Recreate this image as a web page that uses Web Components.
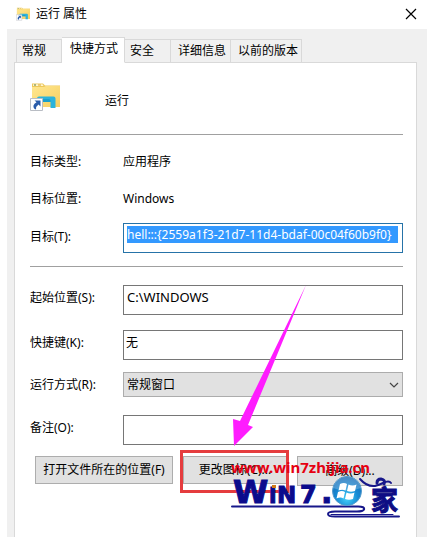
<!DOCTYPE html>
<html lang="zh-CN">
<head>
<meta charset="utf-8">
<title>运行 属性</title>
<style>
html{background:#fff}
body{margin:0;font:12px/16px "Noto Sans","Noto Sans CJK SC",sans-serif;color:#000}
</style>
</head>
<body>
<shortcut-dialog></shortcut-dialog>
<script>
const define=(name,html,setup)=>customElements.define(name,class extends HTMLElement{
  constructor(){super();this.attachShadow({mode:'open'});}
  connectedCallback(){
    const t=document.createElement('template');t.innerHTML=html;
    this.shadowRoot.replaceChildren(t.content.cloneNode(true));
    if(setup)setup(this,this.shadowRoot);
  }
});

define('folder-icon',`
<style>:host{display:block;width:30px;height:30px}svg{display:block;width:100%;height:100%}</style>
<svg viewBox="0 0 30 30" aria-hidden="true">
<defs><linearGradient id="f" x1="0" y1="0" x2="1" y2="1"><stop offset="0" stop-color="#ffe78f"/><stop offset="1" stop-color="#f6cf62"/></linearGradient></defs>
<path d="M2 1.500h11l2 2H30V25H2z" fill="#edc85a"/>
<path d="M3 2.200h9.500l1 1.800H3z" fill="#fff6cf"/><path d="M4 2.500h2v1H4z" fill="#5c7f3f"/><path d="M8 2.500h3v1H8z" fill="#d9a72c"/>
<path d="M2 5h12l2-1h14v21H2z" fill="url(#f)"/>
<path d="M7 16.500q0-2 2-2h14.500q2 0 2 2v9.500h-5v-6h-9v5H7z" fill="#2bb3dc"/>
<path d="M12 20h8.500v-1.500q0-1.500-2-1.500h-6.500z" fill="#1b9fcb"/>
<path d="M.5 16.500h12v12H.5z" fill="#fff" stroke="#b9bdc4"/>
<path d="M4.500 18.500h6v6l-2-2q-2.500 1.500-2.500 5-3-1-2.500-4 .5-2 3-3.200z" fill="#2a5caa"/>
</svg>`);

define('title-bar',`
<style>
:host{display:flex;align-items:center;height:29px;padding:0 8px 2px 16px;box-sizing:border-box;background:#fff}
folder-icon{width:14px;height:14px;margin-right:6px}
h1{font:inherit;margin:0;flex:1}
button{border:0;padding:2px;background:none;width:16px;height:16px}
svg{display:block;width:12px;height:12px}
</style>
<folder-icon></folder-icon><h1><slot></slot></h1>
<button aria-label="关闭"><svg viewBox="0 0 12 12"><path d="M1 1l10 10M11 1L1 11" stroke="#000" stroke-width="1.200"/></svg></button>`);

define('tab-strip',`
<style>
:host{display:flex;align-items:flex-end;height:25px;padding-left:2px;margin-bottom:-1px;position:relative}
</style><slot></slot>`,h=>h.setAttribute('role','tablist'));

define('tab-item',`
<style>
:host{display:block;min-width:0}
button{font:inherit;color:inherit;box-sizing:border-box;width:100%;height:24px;white-space:nowrap;text-align:left;
 padding:0 5px;border:1px solid #d9d9d9;border-left-width:0;background:#f0f0f0}
:host([first]) button{border-left-width:1px}
:host([selected]) button{height:26px;background:#fff;border-bottom-color:#fff;padding:0 8px 3px}
:host([wide]) button{padding-left:7px}
</style><button role="tab"><slot></slot></button>`);

define('static-row',`
<style>
:host{display:grid;grid-template-columns:93px 1fr;align-items:center;height:37px}
</style><span><slot name="label"></slot></span><span><slot></slot></span>`);

define('field-row',`
<style>
:host{display:grid;grid-template-columns:93px 1fr;align-items:center}
label{padding-bottom:4px}
input{font:13px/17px "Noto Sans","Noto Sans CJK SC",sans-serif;color:#000;box-sizing:border-box;width:100%;min-width:0;height:30px;margin:0;
 border:1px solid #767676;border-radius:0;background:#fff;padding:2px 3px 9px;outline:0}
:host([small]) input,:host([active]) input{font-size:12px}
:host([small]) input{padding-left:2px}
:host([active]) label{padding-bottom:2px}
:host([active]) input{border-color:#2673a8;color:#fff;background:#3399ff content-box;padding-right:4px}
</style><label for="c"></label><input id="c" type="text">`,(h,r)=>{
  r.querySelector('label').textContent=h.getAttribute('label');
  r.querySelector('input').value=h.getAttribute('value')||'';
});

define('choice-row',`
<style>
:host{display:grid;grid-template-columns:93px 1fr;align-items:center}
.box{display:grid;align-items:center}
.box>*{grid-area:1/1}
select{appearance:none;font:inherit;color:#000;width:100%;height:25px;box-sizing:border-box;margin:0;
 border:1px solid #acacac;border-radius:0;background:#e1e1e1;padding:0 20px 0 3px}
svg{width:10px;height:8px;justify-self:end;margin-right:4px;pointer-events:none}
</style><label for="c"></label><div class="box"><select id="c"><option></option></select>
<svg viewBox="0 0 10 8"><path d="M1 2l4 4 4-4" fill="none" stroke="#444" stroke-width="1.200"/></svg></div>`,(h,r)=>{
  r.querySelector('label').textContent=h.getAttribute('label');
  r.querySelector('option').textContent=h.getAttribute('value');
});

define('push-button',`
<style>
:host{display:block;position:relative}
button{font:inherit;color:#000;box-sizing:border-box;width:100%;height:28px;margin:0;padding:0;white-space:nowrap;
 border:1px solid #adadad;border-radius:0;background:#e1e1e1}
:host([tall]) button{height:30px}
:host([framed])::after{content:"";position:absolute;inset:-6px -2px -7px -3px;border:3px solid #e53c3e}
</style><button><slot></slot></button>`);

define('pointer-arrow',`
<style>:host{display:block;width:76px;height:164px;pointer-events:none}svg{display:block}</style>
<svg width="76" height="164" viewBox="0 0 76 164" aria-hidden="true">
<path d="M75 0L9 136 2 134l1 27L22 142l-5-2z" fill="#ff1cff"/>
</svg>`);

define('site-mark',`
<style>:host{display:block;width:174px;height:64px;pointer-events:none}svg{display:block;overflow:visible}</style>
<svg width="174" height="64" viewBox="0 0 174 64">
<defs>
<radialGradient id="orb" cx=".5" cy=".75" r=".75"><stop offset="0" stop-color="#46d2fa"/><stop offset=".5" stop-color="#168bd4"/><stop offset="1" stop-color="#1769b4"/></radialGradient>
</defs>
<text x="1" y="17" font-family="Noto Sans, sans-serif" font-weight="700" font-size="15" fill="#e60012">www.win7zhijia.cn</text>
<g fill="#0b0b8c" stroke="#0b0b8c" font-family="DejaVu Sans, sans-serif" font-weight="700">
<text y="47" stroke-width="1"><tspan x="3" font-size="32">W</tspan><tspan x="39" font-size="22">i</tspan><tspan x="47" font-size="23">N</tspan><tspan x="70" font-size="24">7</tspan><tspan x="91" font-size="30">.</tspan></text>
</g>
<path d="M42 29h4v3h-4z" fill="#d17a19"/>
<g fill="none" stroke="#17178a" stroke-linecap="round">
<path d="M2 50.500H128q7 0 6 3-1 2-7 2H105q-7 0-7 2.500 0 2.500 7 2.500H169" stroke-width="2"/>
<path d="M101 58.500h62" stroke-width="1"/>
<path d="M130 23q7 8 15 7 4-1 8-3 6-3 8 0" stroke-width="2"/>
<path d="M147 27q0-4 4-4 5 1 3 5" stroke-width="3"/>
</g>
<text x="141" y="54" font-family="Noto Sans CJK SC, sans-serif" font-weight="700" font-size="27" fill="#0d0d84" stroke="#0d0d84">家</text>
<circle cx="117" cy="35" r="14.500" fill="url(#orb)" stroke="#539bcc"/>
<path d="M103 32q3-11 14-11 11 0 14 11-14 5-28 0z" fill="#fff" opacity=".22"/>
<g fill="#fff"><path d="M110 28q4-2 7 0l-1.500 6.500q-3-1.500-7 0z"/><path d="M118.500 28.500q4 2 8 0l-1.500 6.500q-4 1.500-8 0z"/><path d="M108 36q4-2 7 0l-1.500 6.500q-3-2-7 0z"/><path d="M116.500 36.500q4 2 8 0l-1.500 6.500q-4 1.500-8 0z"/></g>
</svg>`);

define('shortcut-dialog',`
<style>
:host{display:flex;flex-direction:column;min-height:100vh;position:relative;overflow:hidden}
.frame{flex:1;display:flex;flex-direction:column;background:#f0f0f0;margin-left:7px;padding:9px 10px 0 7px}
main{flex:1;background:#fff;border:1px solid #d9d9d9;border-bottom:0;padding:0 13px 20px 15px}
header{display:flex;align-items:center;gap:45px;height:71px}
header span{padding-top:4px}
header folder-icon{margin-bottom:4px}
hr{border:0;border-top:1px solid #a0a0a0;margin:0}
.target{padding:8px 0 13px}
.target field-row{margin-top:6px}
.options{padding-top:18px}
.options field-row{margin-bottom:15px}
.options [small]{margin-bottom:12px}
.options choice-row{margin-bottom:18px}
.options .note{margin-bottom:11px}
.actions{display:grid;grid-template-columns:138fr 104fr 106fr;gap:10px;margin-left:5px}
pointer-arrow{position:absolute;right:120px;top:285px}
site-mark{position:absolute;right:23px;top:456px}
.s{width:46px}.m{width:60px}.a{width:63px}.l{width:71px}
</style>
<title-bar>运行 属性</title-bar>
<div class="frame">
<tab-strip><tab-item class="s" first>常规</tab-item><tab-item class="a" selected>快捷方式</tab-item><tab-item class="s">安全</tab-item><tab-item class="m" wide>详细信息</tab-item><tab-item class="l" wide>以前的版本</tab-item></tab-strip>
<main>
<header><folder-icon></folder-icon><span>运行</span></header>
<hr>
<section class="target">
<static-row><span slot="label">目标类型:</span>应用程序</static-row>
<static-row><span slot="label">目标位置:</span>Windows</static-row>
<field-row active label="目标(T):" value="hell:::{2559a1f3-21d7-11d4-bdaf-00c04f60b9f0}"></field-row>
</section>
<hr>
<section class="options">
<field-row label="起始位置(S):" value="C:\\WINDOWS"></field-row>
<field-row small label="快捷键(K):" value="无"></field-row>
<choice-row label="运行方式(R):" value="常规窗口"></choice-row>
<field-row class="note" label="备注(O):"></field-row>
<div class="actions"><push-button>打开文件所在的位置(F)</push-button><push-button framed>更改图标(C)...</push-button><push-button tall>高级(D)...</push-button></div>
</section>
</main>
</div>
<pointer-arrow></pointer-arrow>
<site-mark></site-mark>`);
</script>
</body>
</html>
